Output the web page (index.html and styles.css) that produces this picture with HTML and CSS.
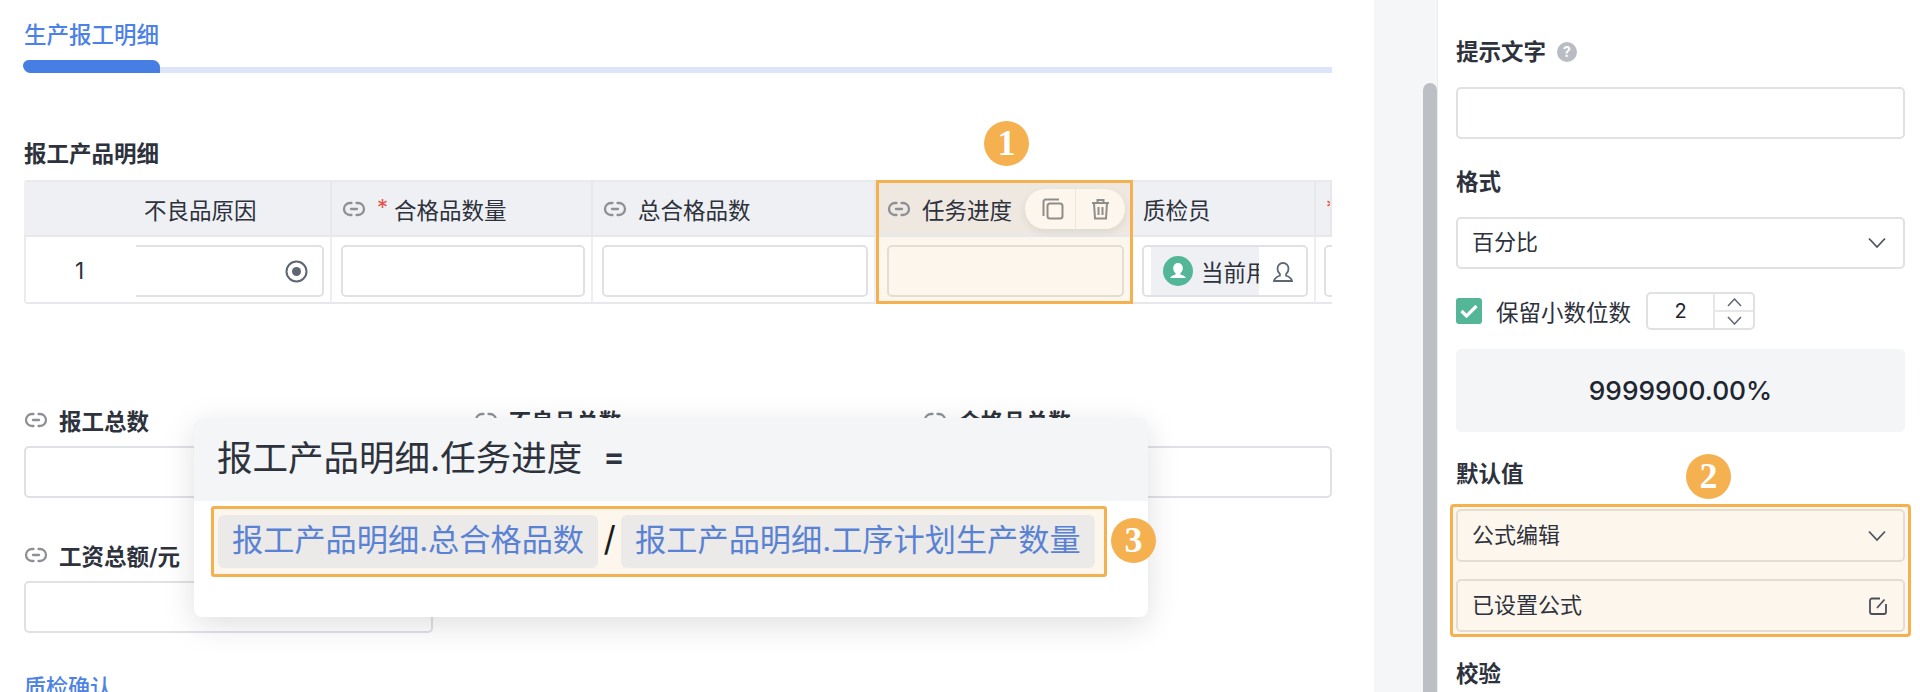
FILE: index.html
```html
<!DOCTYPE html>
<html lang="zh-CN">
<head>
<meta charset="utf-8">
<title>生产报工明细</title>
<link rel="stylesheet" href="styles.css">
</head>
<body>
<svg class="defs" width="0" height="0" aria-hidden="true">
  <symbol id="link" viewBox="0 0 24 16"><path d="M9.5 2H8a6 6 0 0 0 0 12h1.5M14.5 2H16a6 6 0 0 1 0 12h-1.5M9 8h6" fill="none" stroke="currentColor" stroke-width="2.3" stroke-linecap="round"/></symbol>
  <symbol id="chev" viewBox="0 0 18 12"><path d="M1 1.5l8 8.5 8-8.5" fill="none" stroke="currentColor" stroke-width="1.8"/></symbol>
</svg>
<div class="page">
  <main class="main">
    <div class="tab-text">生产报工明细</div>
    <div class="tab-track"><span class="tab-active"></span><span class="tab-rest"></span></div>
    <div class="sub-title">报工产品明细</div>
    <div class="table">
      <div class="th"></div>
      <div class="th th-first">不良品原因</div>
      <div class="th"><svg class="ic-link"><use href="#link"/></svg><span class="req">*</span>合格品数量</div>
      <div class="th"><svg class="ic-link"><use href="#link"/></svg>总合格品数</div>
      <div class="th th-sel"><svg class="ic-link"><use href="#link"/></svg>任务进度
        <div class="pill">
          <span class="pill-btn"><svg width="22" height="22" viewBox="0 0 22 22" fill="none" stroke="#8e8d8a" stroke-width="2"><path d="M1.5 18V3.5a2 2 0 0 1 2-2H17"/><rect x="5.5" y="5.5" width="15" height="15" rx="2.5"/></svg></span>
          <span class="pill-btn"><svg width="19" height="22" viewBox="0 0 19 22" fill="none" stroke="#8e8d8a" stroke-width="2"><path d="M1 5h17M6.500 5V2h6v3M3 5l1 15.500h11L16 5M7.500 9v8M11.500 9v8"/></svg></span>
        </div>
      </div>
      <div class="th">质检员</div>
      <div class="th"><span class="req">*</span></div>

      <div class="td td-num">1</div>
      <div class="td td-first"><div class="input input-cut"><svg width="23" height="23" viewBox="0 0 23 23"><circle cx="11.500" cy="11.500" r="10" fill="none" stroke="#5f6673" stroke-width="2"/><circle cx="11.500" cy="11.500" r="4.500" fill="#5f6673"/></svg></div></div>
      <div class="td"><div class="input"></div></div>
      <div class="td"><div class="input"></div></div>
      <div class="td td-sel"><div class="input input-sel"></div></div>
      <div class="td"><div class="input input-user">
        <div class="user-tag"><svg width="30" height="30" viewBox="0 0 30 30"><circle cx="15" cy="15" r="15" fill="#52b697"/><path d="M15 7a4.800 4.800 0 0 1 4.800 5c0 2.500-1.200 4.300-2.400 5.200v1.300c2 .8 4.600 1.500 5.600 3.500H7c1-2 3.600-2.700 5.600-3.500v-1.300c-1.200-.9-2.400-2.700-2.400-5.200A4.800 4.800 0 0 1 15 7z" fill="#fff"/></svg><span class="user-name">当前用户</span></div>
        <span class="user-btn"><svg width="22" height="20" viewBox="0 0 22 20" fill="none" stroke="#5f6673" stroke-width="1.800"><path d="M11 1a5.500 5.500 0 0 1 5.500 5.700c0 2.500-1.100 4.300-2.400 5.300v1.700c1.800.6 5.300 1.700 5.900 5.300H2c.6-3.600 4.100-4.700 5.900-5.300V12C6.600 11 5.500 9.200 5.500 6.700A5.500 5.500 0 0 1 11 1z"/></svg></span>
      </div></div>
      <div class="td td-last"><div class="input"></div></div>
    </div>

    <div class="form-row form-row-1">
      <div class="field"><div class="f-label"><svg class="ic-link"><use href="#link"/></svg>报工总数</div><div class="input"></div></div>
      <div class="field"><div class="f-label"><svg class="ic-link"><use href="#link"/></svg>不良品总数</div><div class="input"></div></div>
      <div class="field"><div class="f-label"><svg class="ic-link"><use href="#link"/></svg>合格品总数</div><div class="input"></div></div>
    </div>
    <div class="form-row form-row-2">
      <div class="field"><div class="f-label"><svg class="ic-link"><use href="#link"/></svg>工资总额/元</div><div class="input"></div></div>
    </div>
    <div class="section-link">质检确认</div>
  </main>

  <div class="strip"><div class="thumb"></div></div>

  <aside class="panel">
    <div class="p-label">提示文字<span class="help">?</span></div>
    <div class="input p-input"></div>
    <div class="p-label p-gap">格式</div>
    <div class="input p-input p-select"><span>百分比</span><svg class="chev"><use href="#chev"/></svg></div>
    <div class="decimals">
      <span class="check"><svg width="18" height="14" viewBox="0 0 18 14"><path d="M1.500 7l5 5L16.500 2" fill="none" stroke="#fff" stroke-width="3.200"/></svg></span>
      <span class="dec-text">保留小数位数</span>
      <div class="stepper">
        <span class="step-val">2</span>
        <div class="step-btns">
          <span class="step-btn"><svg width="15" height="9" viewBox="0 0 15 9"><path d="M1 8l6.500-7L14 8" fill="none" stroke="#5f6673" stroke-width="1.500"/></svg></span>
          <span class="step-btn"><svg width="15" height="9" viewBox="0 0 15 9"><path d="M1 1l6.500 7L14 1" fill="none" stroke="#5f6673" stroke-width="1.500"/></svg></span>
        </div>
      </div>
    </div>
    <div class="preview">9999900.00%</div>
    <div class="p-label p-gap-2">默认值</div>
    <div class="hl-box">
      <div class="input p-input p-select p-sel-hl"><span>公式编辑</span><svg class="chev"><use href="#chev"/></svg></div>
      <div class="input p-input p-select p-sel-hl"><span>已设置公式</span><svg class="ic-edit" width="18" height="18" viewBox="0 0 18 18" fill="none" stroke="#4a4f59" stroke-width="1.800"><path d="M11 1.500H3A2 2 0 0 0 1 3.500v11.500a2 2 0 0 0 2 2h12a2 2 0 0 0 2-2V7"/><path d="M15.500 2.500L8 11"/></svg></div>
    </div>
    <div class="p-label p-gap-3">校验</div>
  </aside>

  <div class="popup">
    <div class="popup-head">报工产品明细.任务进度<span class="eq">=</span></div>
    <div class="formula">
      <span class="chip">报工产品明细.总合格品数</span>
      <span class="slash">/</span>
      <span class="chip">报工产品明细.工序计划生产数量</span>
    </div>
  </div>

  <span class="badge badge-1">1</span>
  <span class="badge badge-2">2</span>
  <span class="badge badge-3">3</span>
</div>
</body>
</html>
```
FILE: styles.css
```css
* { box-sizing: border-box; }
html, body { margin: 0; padding: 0; }
body {
  width: 1920px;
  height: 692px;
  overflow: hidden;
  background: #fff;
  color: #2d323c;
  font-family: Inter, "Noto Sans CJK SC", sans-serif;
  font-size: 22px;
}
.defs { position: absolute; }
.page { position: relative; display: flex; width: 1920px; height: 692px; overflow: hidden; }

/* main column */
.main { width: 1374px; height: 692px; padding: 20px 42px 0 24px; overflow: hidden; flex: none; }
.tab-text { height: 30px; line-height: 30px; color: #4c82e6; font-size: 22.500px; font-weight: 500; }
.tab-track { display: flex; align-items: flex-end; height: 13px; margin: 10px 0 0 -1px; }
.tab-active { width: 137px; height: 13px; background: #477ee3; border-radius: 6px 8px 0 8px; }
.tab-rest { flex: 1; height: 6px; background: #dce6f8; }
.sub-title { height: 30px; line-height: 30px; margin-top: 66px; font-weight: 600; font-size: 22.500px; }

.ic-link { width: 24px; height: 16px; color: #8d9095; flex: none; margin-right: 11px; }
.req { color: #e5534b; margin-right: 6px; font-size: 22px; line-height: 1; position: relative; top: -2px; }

/* table */
.table {
  display: grid;
  grid-template-columns: 112px 196px 261px 283px 257px 183px 16px;
  grid-template-rows: 57px 67px;
  height: 124px;
  margin-top: 11px;
  border-radius: 4px 0 0 4px;
  overflow: hidden;
  box-shadow: inset 2px 0 0 #e9ebef;
  font-size: 22.500px;
}
.th {
  display: flex;
  align-items: center;
  position: relative;
  padding-left: 10px;
  background: #eff0f4;
  border-top: 2px solid #e8eaee;
  border-right: 2px solid #e6e8ec;
  border-bottom: 2px solid #e6e8ec;
  white-space: nowrap;
  overflow: hidden;
}
.th:first-child { border-right: 0; }
.th-first { padding-left: 8px; }
.th:last-child { border-right: 0; padding-left: 6px; }
.td {
  position: relative;
  display: flex;
  align-items: center;
  padding: 3px 6px 0 9px;
  border-right: 2px solid #eceef1;
  border-bottom: 2px solid #e6e8ec;
  background: #fff;
}
.td-num { border-right: 0; padding: 2px 0 0 49px; border-left: 2px solid #e9ebef; }
.td-first { padding-left: 0; }
.td-last { border-right: 0; padding: 3px 0 0 8px; width: 40px; }

.input { height: 52px; width: 100%; border: 2px solid #e0e1e5; border-radius: 5px; background: #fff; flex: none; }
.input-cut { display: flex; align-items: center; justify-content: flex-end; padding-right: 14px; border-left: 0; border-radius: 0 5px 5px 0; }
.input-user { display: flex; align-items: stretch; overflow: hidden; }
.user-tag { width: 108px; margin-left: 7px; display: flex; align-items: center; gap: 8px; padding-left: 12px; background: #eff0f4; overflow: hidden; white-space: nowrap; flex: none; }
.user-tag svg { flex: none; }
.user-btn { flex: 1; display: flex; align-items: center; justify-content: center; padding-top: 2px; }

.th-sel { background: #eee8e1; overflow: visible; z-index: 1; padding-left: 11px; }
.td-sel { background: #fdf6ec; padding-left: 11px; padding-right: 7px; z-index: 1; }
.input-sel { background: transparent; border-color: #e4ddd2; }
.th-sel::after, .td-sel::after { content: ""; position: absolute; left: 0; right: -2px; border: solid #f5b050; border-width: 0 3px; top: 0; bottom: -2px; pointer-events: none; }
.th-sel::after { border-top-width: 3px; top: -2px; }
.td-sel::after { border-bottom-width: 3px; top: -3px; }

.pill { position: absolute; left: 149px; top: 7px; display: flex; width: 100px; height: 40px; background: #fdf6ec; border-radius: 20px; box-shadow: 0 3px 8px rgba(0,0,0,.08); }
.pill-btn { flex: 1; display: flex; align-items: center; justify-content: center; }
.pill-btn:first-child { border-right: 1px solid #eee6d9; flex: none; width: 51px; padding-left: 5px; }

/* form rows */
.form-row { display: grid; grid-template-columns: repeat(3, 1fr); column-gap: 41px; }
.form-row-1 { margin-top: 101px; }
.form-row-2 { margin-top: 42px; }
.field { min-width: 0; }
.f-label { display: flex; align-items: center; height: 30px; margin-bottom: 11px; font-weight: 600; font-size: 22.500px; white-space: nowrap; }
.section-link { height: 30px; line-height: 30px; margin-top: 39px; color: #4c82e6; font-weight: 500; font-size: 22px; }

/* strip */
.strip { width: 63px; height: 692px; background: #f5f6f8; display: flex; flex-direction: column; align-items: flex-end; flex: none; }
.thumb { width: 14px; flex: 1; margin-top: 83px; background: #bcbfc4; border-radius: 7px 7px 0 0; }

/* panel */
.panel { width: 483px; height: 692px; border-left: 1px solid #ebecee; padding: 37px 15px 0 18px; overflow: hidden; flex: none; }
.p-label { display: flex; align-items: center; height: 30px; padding-bottom: 4px; font-weight: 600; font-size: 22.500px; }
.help { width: 20px; height: 20px; margin: 4px 0 0 11px; border-radius: 50%; background: #b9bcc3; color: #fff; font-size: 14px; font-weight: 700; line-height: 20px; text-align: center; }
.p-input { margin-top: 20px; }
.p-gap { margin-top: 28px; }
.p-select { display: flex; align-items: center; justify-content: space-between; padding: 0 17px 6px 14px; font-size: 22px; }
.chev { width: 18px; height: 12px; color: #4f5560; margin-top: 6px; }
.ic-edit { margin: 6px -1px 0 0; }
.decimals { display: flex; align-items: center; height: 38px; margin-top: 23px; }
.check { display: flex; align-items: center; justify-content: center; width: 26px; height: 26px; border-radius: 3px; background: #52b697; }
.dec-text { margin-left: 14px; font-size: 22.500px; }
.stepper { display: flex; width: 109px; height: 38px; margin-left: 15px; border: 2px solid #e0e1e5; border-radius: 5px; }
.step-val { flex: none; width: 65px; line-height: 34px; text-align: center; font-size: 20px; color: #1f2430; }
.step-btns { flex: 1; display: flex; flex-direction: column; border-left: 2px solid #e6e7ea; }
.step-btn { flex: 1; display: flex; align-items: center; justify-content: center; }
.step-btn:first-child { border-bottom: 2px solid #e6e7ea; }
.preview { height: 83px; margin-top: 19px; border-radius: 5px; background: #f4f5f7; text-align: center; line-height: 83px; font-size: 26.300px; font-weight: 500; color: #20262f; }
.p-gap-2 { margin-top: 27px; }
.hl-box { display: flex; flex-direction: column; gap: 17px; margin: 15px -6px 0; padding: 2px 3px; background: #fdf6ec; border: 3px solid #f5b050; border-radius: 4px; }
.p-sel-hl { margin-top: 0; height: 53px; background: transparent; border-color: #e4ddd2; }
.p-gap-3 { margin-top: 22px; }

/* popup */
.popup { position: absolute; left: 194px; top: 418px; width: 954px; height: 199px; background: #fff; border-radius: 8px; box-shadow: 0 8px 32px rgba(0,0,0,.13); overflow: hidden; }
.popup-head { height: 83px; padding-left: 23px; line-height: 82px; background: #f4f5f7; font-size: 35.500px; color: #2d323c; white-space: nowrap; }
.eq { margin-left: 21px; font-weight: 600; font-size: 32px; position: relative; top: -3px; }
.formula { display: flex; align-items: center; width: 896px; height: 71px; margin: 5px 0 0 17px; padding: 0 0 0 4px; background: #fdf6ec; border: 3px solid #f5b050; border-radius: 3px; }
.chip { display: flex; align-items: center; height: 53px; padding: 0 14px 8px; background: #ebeae8; border-radius: 6px; color: #5a82d4; font-size: 31.200px; white-space: nowrap; }
.slash { width: 23px; padding-bottom: 6px; text-align: center; font-size: 34px; color: #1b1b1b; }

/* numbered badges */
.badge { position: absolute; display: block; width: 45px; height: 45px; border-radius: 50%; background: #f5b050; color: #fff; font-family: "Liberation Serif", serif; font-size: 36px; font-weight: 700; line-height: 45px; text-align: center; }
.badge-1 { left: 984px; top: 121px; }
.badge-2 { left: 1686px; top: 454px; }
.badge-3 { left: 1111px; top: 518px; }
```
